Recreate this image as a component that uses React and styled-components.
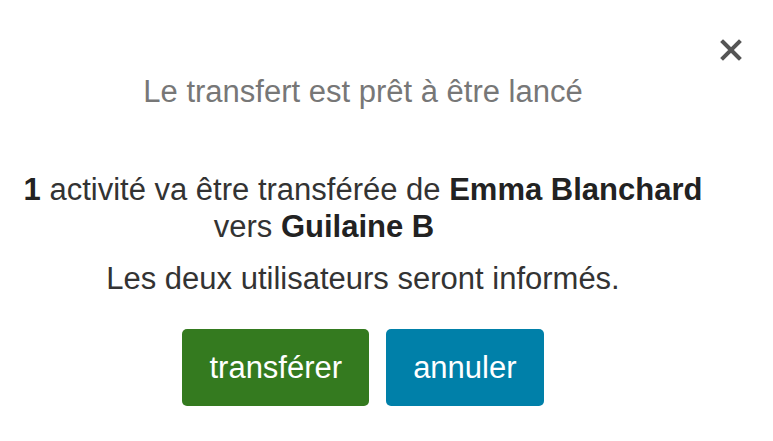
import React from "react";
import styled, { createGlobalStyle } from "styled-components";

const Global = createGlobalStyle`
  html, body {
    margin: 0;
    padding: 0;
    background: #fff;
    font-family: "Liberation Sans", Arial, sans-serif;
  }
`;

const Dialog = styled.div`
  position: relative;
  width: 773px;
  height: 441px;
  box-sizing: border-box;
  padding: 0 47px 0 0;
  display: flex;
  flex-direction: column;
  align-items: center;
  text-align: center;
`;

const Close = styled.button`
  position: absolute;
  top: 38px;
  right: 30px;
  width: 24px;
  height: 24px;
  padding: 0;
  border: 0;
  background: none;
  cursor: pointer;
  display: flex;
  align-items: center;
  justify-content: center;
`;

const Title = styled.h2`
  margin: 74px 0 0;
  font-size: 31px;
  font-weight: normal;
  line-height: 36px;
  color: #777;
`;

const Message = styled.p`
  margin: 61px 0 0;
  font-size: 31px;
  line-height: 37px;
  color: #333;

  b {
    color: #222;
  }
`;

const Spacer = styled.span`
  display: inline-block;
  width: 78px;
`;

const Notice = styled.p`
  margin: 16px 0 0;
  font-size: 31px;
  line-height: 36px;
  color: #333;
`;

const Actions = styled.div`
  margin-top: 32px;
  display: flex;
  gap: 17px;
`;

const Button = styled.button`
  height: 77px;
  padding: 0 27px;
  border: 0;
  border-radius: 5px;
  background: ${(p) => p.$bg};
  color: #fff;
  font-family: inherit;
  font-size: 31px;
  cursor: pointer;
`;

export default function App() {
  return (
    <>
      <Global />
      <Dialog>
        <Close aria-label="fermer">
          <svg width="24" height="24" viewBox="0 0 24 24">
            <path d="M4 4 L20 20 M20 4 L4 20" stroke="#555" strokeWidth="4" strokeLinecap="square" />
          </svg>
        </Close>
        <Title>Le transfert est prêt à être lancé</Title>
        <Message>
          <b>1</b> activité va être transférée de <b>Emma Blanchard</b>
          <br />
          vers <b>Guilaine B</b>
          <Spacer />
        </Message>
        <Notice>Les deux utilisateurs seront informés.</Notice>
        <Actions>
          <Button $bg="#347a1f">transférer</Button>
          <Button $bg="#0080a9">annuler</Button>
        </Actions>
      </Dialog>
    </>
  );
}
